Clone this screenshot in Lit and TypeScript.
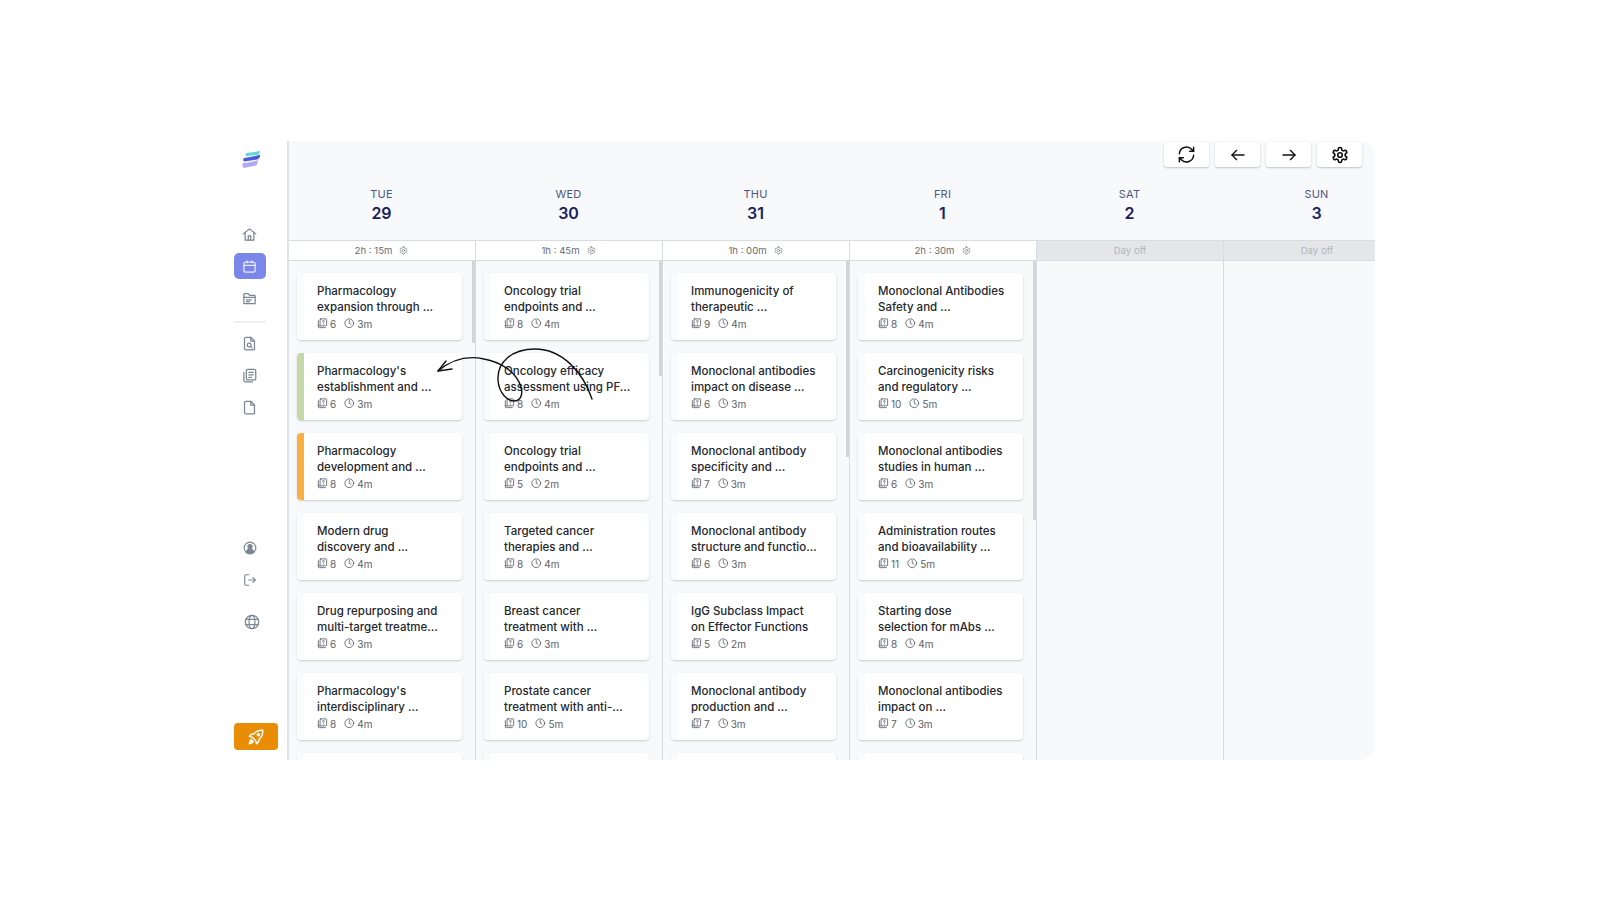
import { LitElement, html, css, svg } from "lit";
import { customElement } from "lit/decorators.js";

type Card = { a: string; b: string; q: number; t: string; strip?: string };
const C = (a: string, b: string, q: number, t: string, strip?: string): Card => ({ a, b, q, t, strip });
const PEEK = C("", "", 0, "");

const DAYS = [
  { d: "TUE", n: "29", dur: "2h : 15m", thumb: 82, cards: [
    C("Pharmacology", "expansion through ...", 6, "3m"),
    C("Pharmacology's", "establishment and ...", 6, "3m", "green"),
    C("Pharmacology", "development and ...", 8, "4m", "orange"),
    C("Modern drug", "discovery and ...", 8, "4m"),
    C("Drug repurposing and", "multi-target treatme...", 6, "3m"),
    C("Pharmacology's", "interdisciplinary ...", 8, "4m"),
    PEEK,
  ]},
  { d: "WED", n: "30", dur: "1h : 45m", thumb: 115, cards: [
    C("Oncology trial", "endpoints and ...", 8, "4m"),
    C("Oncology efficacy", "assessment using PF...", 8, "4m"),
    C("Oncology trial", "endpoints and ...", 5, "2m"),
    C("Targeted cancer", "therapies and ...", 8, "4m"),
    C("Breast cancer", "treatment with ...", 6, "3m"),
    C("Prostate cancer", "treatment with anti-...", 10, "5m"),
    PEEK,
  ]},
  { d: "THU", n: "31", dur: "1h : 00m", thumb: 196, cards: [
    C("Immunogenicity of", "therapeutic ...", 9, "4m"),
    C("Monoclonal antibodies", "impact on disease ...", 6, "3m"),
    C("Monoclonal antibody", "specificity and ...", 7, "3m"),
    C("Monoclonal antibody", "structure and functio...", 6, "3m"),
    C("IgG Subclass Impact", "on Effector Functions", 5, "2m"),
    C("Monoclonal antibody", "production and ...", 7, "3m"),
    PEEK,
  ]},
  { d: "FRI", n: "1", dur: "2h : 30m", thumb: 259, cards: [
    C("Monoclonal Antibodies", "Safety and ...", 8, "4m"),
    C("Carcinogenicity risks", "and regulatory ...", 10, "5m"),
    C("Monoclonal antibodies", "studies in human ...", 6, "3m"),
    C("Administration routes", "and bioavailability ...", 11, "5m"),
    C("Starting dose", "selection for mAbs ...", 8, "4m"),
    C("Monoclonal antibodies", "impact on ...", 7, "3m"),
    PEEK,
  ]},
  { d: "SAT", n: "2", dur: "", thumb: 0, cards: [] },
  { d: "SUN", n: "3", dur: "", thumb: 0, cards: [] },
];

const GEAR = svg`<path d="M12.22 2h-.44a2 2 0 0 0-2 2v.18a2 2 0 0 1-1 1.73l-.43.25a2 2 0 0 1-2 0l-.15-.08a2 2 0 0 0-2.73.73l-.22.38a2 2 0 0 0 .73 2.73l.15.1a2 2 0 0 1 1 1.72v.51a2 2 0 0 1-1 1.74l-.15.09a2 2 0 0 0-.73 2.73l.22.38a2 2 0 0 0 2.73.73l.15-.08a2 2 0 0 1 2 0l.43.25a2 2 0 0 1 1 1.73V20a2 2 0 0 0 2 2h.44a2 2 0 0 0 2-2v-.18a2 2 0 0 1 1-1.73l.43-.25a2 2 0 0 1 2 0l.15.08a2 2 0 0 0 2.73-.73l.22-.39a2 2 0 0 0-.73-2.73l-.15-.08a2 2 0 0 1-1-1.74v-.5a2 2 0 0 1 1-1.74l.15-.09a2 2 0 0 0 .73-2.73l-.22-.38a2 2 0 0 0-2.73-.73l-.15.08a2 2 0 0 1-2 0l-.43-.25a2 2 0 0 1-1-1.73V4a2 2 0 0 0-2-2z"/><circle cx="12" cy="12" r="3"/>`;

const icon = (body: unknown, size: number, sw = 2) =>
  html`<svg width=${size} height=${size} viewBox="0 0 24 24" fill="none" stroke="currentColor" stroke-width=${sw} stroke-linecap="round" stroke-linejoin="round">${body}</svg>`;

const I = {
  home: svg`<path d="M2 11 12 3l10 8"/><path d="M5 9v12h14V9"/><path d="M10 21v-7h4v7"/>`,
  cal: svg`<rect x="3" y="5" width="18" height="16" rx="3"/><path d="M3 10h18M8 3v3M16 3v3"/>`,
  folder: svg`<path d="M3 20V5a1 1 0 0 1 1-1h6l2 3h8a1 1 0 0 1 1 1v12z"/><path d="M3 10h18"/><path d="M7 14h8M7 17h5"/>`,
  fsearch: svg`<path d="M6 2h8l6 6v13a1 1 0 0 1-1 1H6a2 2 0 0 1-2-2V4a2 2 0 0 1 2-2z"/><path d="M14 2v6h6"/><circle cx="11.5" cy="14.5" r="3"/><path d="m14 17 2 2"/>`,
  stack: svg`<rect x="7" y="2" width="15" height="17" rx="2"/><path d="M11 7h7M11 11h7M11 15h4"/><path d="M3 7v13a2 2 0 0 0 2 2h12"/>`,
  file: svg`<path d="M6 2h8l6 6v13a1 1 0 0 1-1 1H6a2 2 0 0 1-2-2V4a2 2 0 0 1 2-2z"/><path d="M14 2v6h6"/>`,
  user: svg`<circle cx="12" cy="12" r="10"/><circle cx="12" cy="9.5" r="3.5" fill="currentColor"/><path d="M5.5 19c1-3.5 3.5-5 6.500-5s5.500 1.500 6.500 5a10 10 0 0 1-13 0z" fill="currentColor"/>`,
  logout: svg`<path d="M10 3H5a2 2 0 0 0-2 2v14a2 2 0 0 0 2 2h5"/><path d="M10 12h11"/><path d="m17 8 4 4-4 4"/>`,
  globe: svg`<circle cx="12" cy="12" r="10"/><ellipse cx="12" cy="12" rx="4.500" ry="10"/><path d="M3 8h18M3 16h18"/>`,
  refresh: svg`<path d="M3 11a9 9 0 0 1 15.500-5.500L21 8"/><path d="M21 3v5h-5"/><path d="M21 13a9 9 0 0 1-15.500 5.500L3 16"/><path d="M3 21v-5h5"/>`,
  left: svg`<path d="M21 12H3"/><path d="m10 5-7 7 7 7"/>`,
  right: svg`<path d="M3 12h18"/><path d="m14 5 7 7-7 7"/>`,
  clock: svg`<circle cx="12" cy="12" r="10"/><path d="M12 6v6l4 2"/>`,
  quiz: svg`<rect x="7" y="2" width="15" height="16" rx="1.500"/><path d="M12.500 7.500a2 2 0 1 1 3 2c-.8.5-1 1-1 2"/><path d="M14.500 14.500v.01"/><path d="M3 6v14a2 2 0 0 0 2 2h14"/><path d="M3 18h4"/>`,
};

@customElement("app-root")
export class AppRoot extends LitElement {
  static styles = css`
    :host {
      display: block;
      position: relative;
      width: 1600px;
      height: 900px;
      box-sizing: border-box;
      padding: 141px 0 0 234px;
      background: #fff;
      font-family: "Inter", "Noto Sans", sans-serif;
      overflow: hidden;
    }
    .frame { display: flex; width: 1141px; height: 619px; }
    .side {
      width: 55px;
      flex: none;
      box-sizing: border-box;
      border-right: 2px solid #dfe3e8;
      display: flex;
      flex-direction: column;
      padding-bottom: 10px;
      color: #7b8794;
    }
    .logo { margin: 9px 0 0 8px; height: 19px; }
    .logo svg { display: block; }
    .group { display: flex; flex-direction: column; gap: 6px; }
    .g1 { margin-top: 52px; }
    .g2 { margin-top: 7px; }
    .g3 { margin-top: 115px; }
    .g4 { margin-top: 16px; }
    .item {
      width: 32px;
      height: 26px;
      box-sizing: border-box;
      padding-right: 1px;
      display: flex;
      align-items: center;
      justify-content: center;
      border-radius: 5px;
    }
    .item.on { background: #7b87e8; color: #e8ebff; }
    .globe { margin-left: 2px; }
    .div { width: 32px; height: 2px; background: #eef0f3; margin-top: 10px; }
    .rocket {
      margin-top: auto;
      width: 44px;
      height: 27px;
      border-radius: 4px;
      background: #ea8d06;
      display: flex;
      align-items: center;
      justify-content: center;
    }
    .main {
      flex: 1;
      min-width: 0;
      background: #f8f9fb;
      display: flex;
      flex-direction: column;
      overflow: hidden;
      border-radius: 0 16px 16px 0;
    }
    .tools {
      display: flex;
      justify-content: flex-end;
      gap: 6px;
      padding: 1px 13px 0 0;
    }
    .btn {
      width: 45px;
      height: 25px;
      background: #fff;
      border-radius: 3px;
      box-shadow: 0 1px 2px rgba(0, 0, 0, 0.22);
      display: flex;
      align-items: center;
      justify-content: center;
      color: #111;
    }
    .grid { display: grid; grid-template-columns: repeat(6, 187px); width: 1122px; }
    .heads { border-bottom: 1px solid #d9dde2; padding: 20px 0 15px; }
    .head { text-align: center; padding-right: 2px; }
    .dow { font-size: 11px; line-height: 14px; color: #4d5880; letter-spacing: 0.2px; }
    .num { font-size: 16px; line-height: 24px; font-weight: 600; color: #17225e; }
    .durs { border-bottom: 1px solid #d9dde2; background: #fff; }
    .dur {
      height: 19px;
      box-sizing: border-box;
      padding: 0 0 1px 0;
      border-right: 1px solid #d9dde2;
      display: flex;
      align-items: center;
      justify-content: center;
      gap: 7px;
      font-size: 9.600px;
      color: #666b73;
    }
    .dur svg { margin-right: 1px; }
    .dur.off { background: #e4e6e9; color: #b3b6bb; }
    .body { flex: 1; min-height: 0; overflow: hidden; }
    .col {
      position: relative;
      height: 100%;
      box-sizing: border-box;
      border-right: 1px solid #d9dde2;
      padding: 12px 0 0 8px;
      display: flex;
      flex-direction: column;
      gap: 13px;
    }
    .thumb { position: absolute; top: 0; right: 0; width: 3px; background: #d2d4d7; }
    .card {
      flex: none;
      width: 165px;
      height: 67px;
      display: flex;
      background: #fff;
      border-radius: 4px;
      overflow: hidden;
      box-shadow: 0 1px 2px rgba(30, 40, 60, 0.22);
    }
    .strip { width: 6.500px; flex: none; background: #fafbfc; }
    .strip.green { background: #c6d7ab; }
    .strip.orange { background: #f8b044; }
    .txt { padding: 9.500px 0 0 13.500px; min-width: 0; }
    .title {
      font-size: 11.500px;
      line-height: 16px;
      font-weight: 500;
      color: #23262b;
      white-space: nowrap;
    }
    .meta {
      display: flex;
      align-items: center;
      margin-top: 2px;
      height: 14px;
      font-size: 10px;
      color: #5c6167;
    }
    .meta svg { flex: none; color: #4f545a; }
    .q { margin: 0 0 0 2.500px; }
    .clock { display: flex; margin-left: 8px; margin-right: 2.500px; }
    .arrow { position: absolute; left: 0; top: 0; pointer-events: none; }
  `;

  private card(c: Card) {
    return html`<div class="card">
      <div class="strip ${c.strip ?? ""}"></div>
      ${c.a
        ? html`<div class="txt">
            <div class="title">${c.a}</div>
            <div class="title">${c.b}</div>
            <div class="meta">
              ${icon(I.quiz, 10.5, 1.8)}<span class="q">${c.q}</span>
              <span class="clock">${icon(I.clock, 10.5, 1.8)}</span><span>${c.t}</span>
            </div>
          </div>`
        : ""}
    </div>`;
  }

  render() {
    return html`
      <div class="frame">
        <nav class="side">
          <div class="logo">
            <svg width="19" height="19" viewBox="0 0 18 18">
              <path d="M4 3C7 2.500 12 2 17 1c0 2-.5 3-2 3.500L4 6C3 5 3 3.500 4 3z" fill="#62d7d8"/>
              <path d="M2 7.500C7 7 12 6 17 4.500c.3 2-.5 4-2.500 4.500L2 11C.8 10 1 8 2 7.500z" fill="#4858d8"/>
              <path d="M1 12.500C6 12 11 11 15 9.500c.3 2.500-.5 5-2.500 5.500L1.500 17C.3 16 0 13.500 1 12.500z" fill="#b3a9f2"/>
            </svg>
          </div>
          <div class="group g1">
            <div class="item">${icon(I.home, 15)}</div>
            <div class="item on">${icon(I.cal, 15)}</div>
            <div class="item">${icon(I.folder, 15)}</div>
          </div>
          <div class="div"></div>
          <div class="group g2">
            <div class="item">${icon(I.fsearch, 15)}</div>
            <div class="item">${icon(I.stack, 15)}</div>
            <div class="item">${icon(I.file, 15)}</div>
          </div>
          <div class="group g3">
            <div class="item">${icon(I.user, 14)}</div>
            <div class="item">${icon(I.logout, 14)}</div>
          </div>
          <div class="group g4">
            <div class="item globe">${icon(I.globe, 16, 1.8)}</div>
          </div>
          <div class="rocket">
            <svg width="16" height="16" viewBox="0 0 24 24" fill="none" stroke="#fff" stroke-width="2.200" stroke-linejoin="round" stroke-linecap="round">
              <path d="M22 2c-5-.5-9.500 1-13 5L5 8 2 11l4.500 1.500 5 5L13 22l3-3 1-4c4-3.500 5.500-8 5-13z"/>
              <circle cx="15.500" cy="8.500" r="1.500" fill="#fff"/>
              <path d="M5 16c-1.500 1-2.500 3-3 6 3-.5 5-1.500 6-3z" fill="#fff"/>
            </svg>
          </div>
        </nav>
        <main class="main">
          <div class="tools">
            <div class="btn">${icon(I.refresh, 19, 1.9)}</div>
            <div class="btn">${icon(I.left, 16, 2)}</div>
            <div class="btn">${icon(I.right, 16, 2)}</div>
            <div class="btn">${icon(GEAR, 18, 2.2)}</div>
          </div>
          <div class="grid heads">
            ${DAYS.map((d) => html`<div class="head"><div class="dow">${d.d}</div><div class="num">${d.n}</div></div>`)}
          </div>
          <div class="grid durs">
            ${DAYS.map((d) => d.dur
              ? html`<div class="dur"><span>${d.dur}</span>${icon(GEAR, 9, 1.6)}</div>`
              : html`<div class="dur off"><span>Day off</span></div>`)}
          </div>
          <div class="grid body">
            ${DAYS.map((d) => html`<div class="col">
              ${d.thumb ? html`<div class="thumb" style="height:${d.thumb}px"></div>` : ""}
              ${d.cards.map((c) => this.card(c))}
            </div>`)}
          </div>
        </main>
      </div>
      <svg class="arrow" width="1600" height="900" fill="none" stroke="#111" stroke-width="1.400" stroke-linecap="round" stroke-linejoin="round">
        <path d="M592 399C583 372 562 349 535 349C512 349 497 362 498 380C499 394 508 401 514 401C521 401 523 394 521 387C516 371 500 362 484 359C466 355 450 361 438 371"/>
        <path d="M446 361 438 371 452 369"/>
      </svg>
    `;
  }
}
